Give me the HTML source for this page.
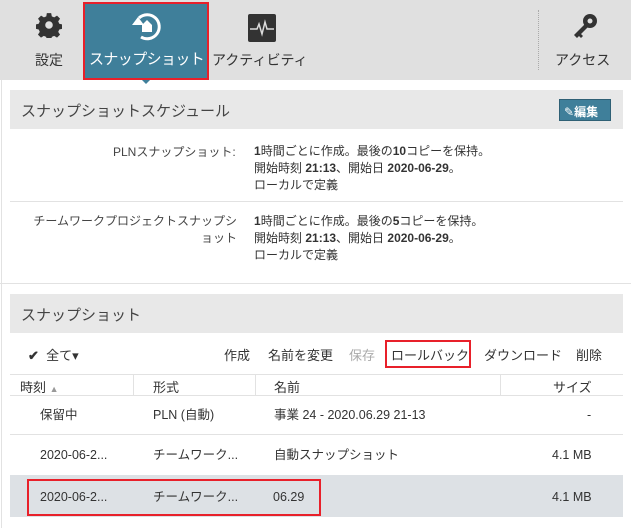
<!DOCTYPE html>
<html><head><meta charset="utf-8"><style>
*{margin:0;padding:0;box-sizing:border-box}
body{width:631px;height:528px;overflow:hidden;background:#fff;font-family:"Liberation Sans","Noto Sans CJK JP",sans-serif;color:#333;position:relative;font-size:13px}
.a{position:absolute;white-space:nowrap}
.top{position:absolute;left:0;top:0;width:631px;height:80px;background:#e0e0e0}
.tab{position:absolute;top:2px;left:83px;width:126px;height:78px;background:#3f7f9a;border:2px solid #e8202a}
.hd{position:absolute;left:10px;width:613px;height:39px;background:#e8e8e8;font-size:15px;color:#444;padding:10px 11px}
.hr{position:absolute;height:1px;background:#e2e2e2}
.b{font-weight:bold}
.red{position:absolute;border:2px solid #e8202a}
.r{font-size:12.5px;line-height:18px;height:18px}
</style></head><body>
<div class="top"></div>
<div class="tab"></div>
<svg class="a" style="left:36px;top:12px" width="26" height="26" viewBox="0 0 24 24"><path fill="#333" d="M10 1h4l.6 3 2.2 1 2.6-1.7 2.8 2.8-1.7 2.6 1 2.2 3 .6v4l-3 .6-1 2.2 1.7 2.6-2.8 2.8-2.6-1.7-2.2 1-.6 3h-4l-.6-3-2.2-1-2.6 1.7-2.8-2.8 1.7-2.6-1-2.2-3-.6v-4l3-.6 1-2.2L1.9 6.1l2.8-2.8 2.6 1.7 2.2-1zM12 8.5a3.5 3.5 0 1 0 0 7a3.5 3.5 0 1 0 0-7z"/></svg>
<div class="a" style="left:35px;top:50px;font-size:14px;color:#333">設定</div>
<svg class="a" style="left:128px;top:10px" width="36" height="34" viewBox="0 0 36 34"><path d="M11 8a12 12 0 1 1 2 19" fill="none" stroke="#fff" stroke-width="3"/><path d="M4 15l6-8 6 8z" fill="#fff"/><path d="M14 22v-7l5-5 5 5v7z" fill="#fff"/></svg>
<div class="a" style="left:89px;top:48px;font-size:15px;letter-spacing:-0.6px;color:#fff">スナップショット</div>
<svg class="a" style="left:248px;top:14px" width="28" height="28" viewBox="0 0 28 28"><rect width="28" height="28" rx="2" fill="#333"/><path d="M2 15h7l2-5 3 10 3-12 2 7h7" fill="none" stroke="#ddd" stroke-width="1.5"/></svg>
<div class="a" style="left:212px;top:50px;font-size:14px;color:#333">アクティビティ</div>
<div class="a" style="left:538px;top:10px;width:0;height:60px;border-left:1px dotted #aaa"></div>
<svg class="a" style="left:570px;top:12px" width="30" height="30" viewBox="0 0 30 30"><circle cx="20" cy="9" r="7" fill="#333"/><circle cx="20" cy="9" r="2.5" fill="#e0e0e0"/><path d="M15 12l-11 11 3 3 2-2 2 2 2-2-2-2 7-7z" fill="#333"/></svg>
<div class="a" style="left:555px;top:50px;font-size:14px;color:#333">アクセス</div>
<div class="a" style="left:142px;top:80px;border:4px solid transparent;border-top-color:#3f7f9a"></div>
<div class="a" style="left:1px;top:80px;width:1px;height:448px;background:#e2e2e2"></div>

<div class="hd" style="top:90px">スナップショットスケジュール</div>
<div class="a" style="left:559px;top:99px;width:52px;height:22px;background:#3f7f9a;border:1px solid #2f6075;color:#fff;font-size:12px;padding:3px 0 0 4px">✎<b>編集</b></div>

<div class="a" style="left:113px;top:143px;font-size:12px;color:#444">PLNスナップショット:</div>
<div class="a" style="left:254px;top:143px;font-size:12px;line-height:17px;color:#333"><span class="b">1</span>時間ごとに作成。最後の<span class="b">10</span>コピーを保持。<br>開始時刻 <span class="b">21:13</span>、開始日 <span class="b">2020-06-29</span>。<br>ローカルで定義</div>
<div class="hr" style="left:10px;top:201px;width:613px"></div>
<div class="a" style="left:32px;top:213px;font-size:12px;line-height:17px;color:#444;text-align:right;width:205px">チームワークプロジェクトスナップシ<br>ョット</div>
<div class="a" style="left:254px;top:213px;font-size:12px;line-height:17px;color:#333"><span class="b">1</span>時間ごとに作成。最後の<span class="b">5</span>コピーを保持。<br>開始時刻 <span class="b">21:13</span>、開始日 <span class="b">2020-06-29</span>。<br>ローカルで定義</div>
<div class="hr" style="left:0;top:283px;width:631px"></div>

<div class="hd" style="top:294px">スナップショット</div>
<div class="a" style="left:28px;top:345px;font-size:13px;color:#333"><b>✔</b>&nbsp;&nbsp;全て▾</div>
<div class="a" style="left:224px;top:345px;font-size:13px;color:#333">作成</div>
<div class="a" style="left:268px;top:345px;font-size:13px;color:#333">名前を変更</div>
<div class="a" style="left:349px;top:345px;font-size:13px;color:#aaa">保存</div>
<div class="red" style="left:385px;top:340px;width:86px;height:28px"></div>
<div class="a" style="left:391px;top:345px;font-size:13px;color:#333">ロールバック</div>
<div class="a" style="left:484px;top:345px;font-size:13px;color:#333">ダウンロード</div>
<div class="a" style="left:576px;top:345px;font-size:13px;color:#333">削除</div>

<div class="hr" style="left:10px;top:374px;width:613px"></div>
<div class="a" style="left:20px;top:377px;font-size:13px">時刻 <span style="font-size:9px;color:#999">▲</span></div>
<div class="a" style="left:133px;top:375px;width:1px;height:20px;background:#e2e2e2"></div>
<div class="a" style="left:153px;top:377px;font-size:13px">形式</div>
<div class="a" style="left:255px;top:375px;width:1px;height:20px;background:#e2e2e2"></div>
<div class="a" style="left:274px;top:377px;font-size:13px">名前</div>
<div class="a" style="left:500px;top:375px;width:1px;height:20px;background:#e2e2e2"></div>
<div class="a" style="left:553px;top:377px;font-size:13px">サイズ</div>
<div class="hr" style="left:10px;top:395px;width:613px"></div>

<div class="a r" style="left:40px;top:406px">保留中</div>
<div class="a r" style="left:153px;top:406px">PLN (自動)</div>
<div class="a r" style="left:274px;top:406px">事業 24 - 2020.06.29 21-13</div>
<div class="a r" style="left:587px;top:406px">-</div>
<div class="hr" style="left:10px;top:434px;width:613px"></div>
<div class="a r" style="left:40px;top:446px">2020-06-2...</div>
<div class="a r" style="left:153px;top:446px">チームワーク...</div>
<div class="a r" style="left:274px;top:446px">自動スナップショット</div>
<div class="a r" style="left:552px;top:446px">4.1 MB</div>
<div class="a" style="left:10px;top:475px;width:613px;height:42px;background:#dde1e5"></div>
<div class="red" style="left:27px;top:479px;width:294px;height:37px"></div>
<div class="a r" style="left:40px;top:488px">2020-06-2...</div>
<div class="a r" style="left:153px;top:488px">チームワーク...</div>
<div class="a r" style="left:273px;top:488px">06.29</div>
<div class="a r" style="left:552px;top:488px">4.1 MB</div>
</body></html>
